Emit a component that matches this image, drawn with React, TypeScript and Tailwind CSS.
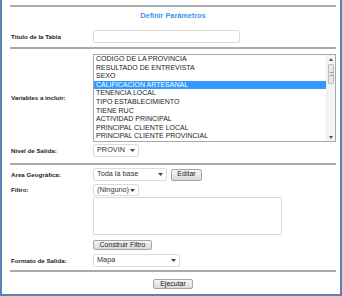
import React from 'react';

const font = { fontFamily: '"Liberation Sans", Arial, sans-serif' };

const variables = [
  'CODIGO DE LA PROVINCIA',
  'RESULTADO DE ENTREVISTA',
  'SEXO',
  'CALIFICACION ARTESANAL',
  'TENENCIA LOCAL',
  'TIPO ESTABLECIMIENTO',
  'TIENE RUC',
  'ACTIVIDAD PRINCIPAL',
  'PRINCIPAL CLIENTE LOCAL',
  'PRINCIPAL CLIENTE PROVINCIAL',
];

const Label: React.FC<{ children: React.ReactNode }> = ({ children }) => (
  <div className="w-[83px] shrink-0 pl-[1px] text-[6.2px] font-bold text-[#222]">{children}</div>
);

const Select: React.FC<{ value: string; width: string }> = ({ value, width }) => (
  <div
    className={`${width} h-full flex items-center justify-between rounded-[2px] border border-[#dcdcdc] bg-white pl-[3px] pr-[3px] text-[7.3px] text-[#333]`}
  >
    <span className="whitespace-nowrap">{value}</span>
    <svg width="5" height="3" viewBox="0 0 5 3" className="shrink-0">
      <path d="M0 0h5L2.5 3z" fill="#444" />
    </svg>
  </div>
);

const Button: React.FC<{ children: React.ReactNode; width: string }> = ({ children, width }) => (
  <div
    className={`${width} h-full flex items-center justify-center rounded-[2px] border border-[#a5a5a5] bg-gradient-to-b from-[#f6f6f6] to-[#d9d9d9] text-[7px] text-[#222] whitespace-nowrap`}
  >
    {children}
  </div>
);

const Rule = ({ mt }: { mt: string }) => <div className={`${mt} h-[2px] bg-[#a9a9a9]`} />;

export default function App() {
  return (
    <div style={font} className="w-[342px] h-[296px] bg-white border-x-2 border-b-2 border-[#5a82b2] pl-[8px] pr-[4px]">
      <div className="h-[5px]" />
      <Rule mt="mt-0" />
      <div className="h-[18px] flex items-center justify-center text-[7.3px] font-bold text-[#3a95ec]">
        Definir Parámetros
      </div>

      <div className="mt-[5px] h-[13px] flex items-center">
        <Label>Titulo de la Tabla</Label>
        <div className="w-[147px] h-full rounded-[2px] border border-[#dadada] bg-white" />
      </div>

      <Rule mt="mt-[4px]" />

      <div className="mt-[5px] h-[88px] flex items-center">
        <Label>Variables a incluir:</Label>
        <div className="w-[245px] h-full flex border border-[#a8a8a8] bg-white">
          <div className="flex-1 flex flex-col">
            {variables.map((v, i) => (
              <div
                key={v}
                className={`h-[8.6px] leading-[8.6px] pl-[2px] text-[7px] ${
                  i === 3 ? 'bg-[#3399ff] text-white' : 'text-[#222]'
                }`}
              >
                {v}
              </div>
            ))}
          </div>
          <div className="w-[9px] flex flex-col bg-[#f4f4f4] border-l border-[#ececec]">
            <div className="h-[8px] flex items-center justify-center">
              <svg width="4" height="3" viewBox="0 0 4 3">
                <path d="M0 3h4L2 0z" fill="#555" />
              </svg>
            </div>
            <div className="mt-[1px] mx-[1px] h-[20px] flex items-center justify-center rounded-[1px] border border-[#bdbdbd] bg-[#e8e8e8]">
              <div className="w-[3px] h-[4px] border-y border-[#999]" />
            </div>
            <div className="flex-1" />
            <div className="h-[8px] flex items-center justify-center">
              <svg width="4" height="3" viewBox="0 0 4 3">
                <path d="M0 0h4L2 3z" fill="#555" />
              </svg>
            </div>
          </div>
        </div>
      </div>

      <div className="mt-[2px] h-[13px] flex items-center">
        <Label>Nivel de Salida:</Label>
        <Select value="PROVIN" width="w-[46px]" />
      </div>

      <Rule mt="mt-[6px]" />

      <div className="mt-[3px] h-[13px] flex items-center">
        <Label>Area Geográfica:</Label>
        <Select value="Toda la base" width="w-[74px]" />
        <div className="ml-[4px] h-[12px]">
          <Button width="w-[31px]">Editar</Button>
        </div>
      </div>

      <div className="mt-[3px] h-[12px] flex items-center">
        <Label>Filtro:</Label>
        <Select value="(Ninguno)" width="w-[46px]" />
      </div>

      <div className="mt-[1px] h-[38px] flex">
        <div className="w-[83px] shrink-0" />
        <div className="w-[189px] h-full rounded-[2px] border border-[#d8d8d8] bg-white" />
      </div>

      <div className="mt-[5px] h-[10px] flex">
        <div className="w-[83px] shrink-0" />
        <Button width="w-[59px]">Construir Filtro</Button>
      </div>

      <div className="mt-[4px] h-[13px] flex items-center">
        <Label>Formato de Salida:</Label>
        <Select value="Mapa" width="w-[87px]" />
      </div>

      <Rule mt="mt-[3px]" />

      <div className="mt-[7px] h-[10px] flex justify-center">
        <Button width="w-[40px]">Ejecutar</Button>
      </div>
    </div>
  );
}
